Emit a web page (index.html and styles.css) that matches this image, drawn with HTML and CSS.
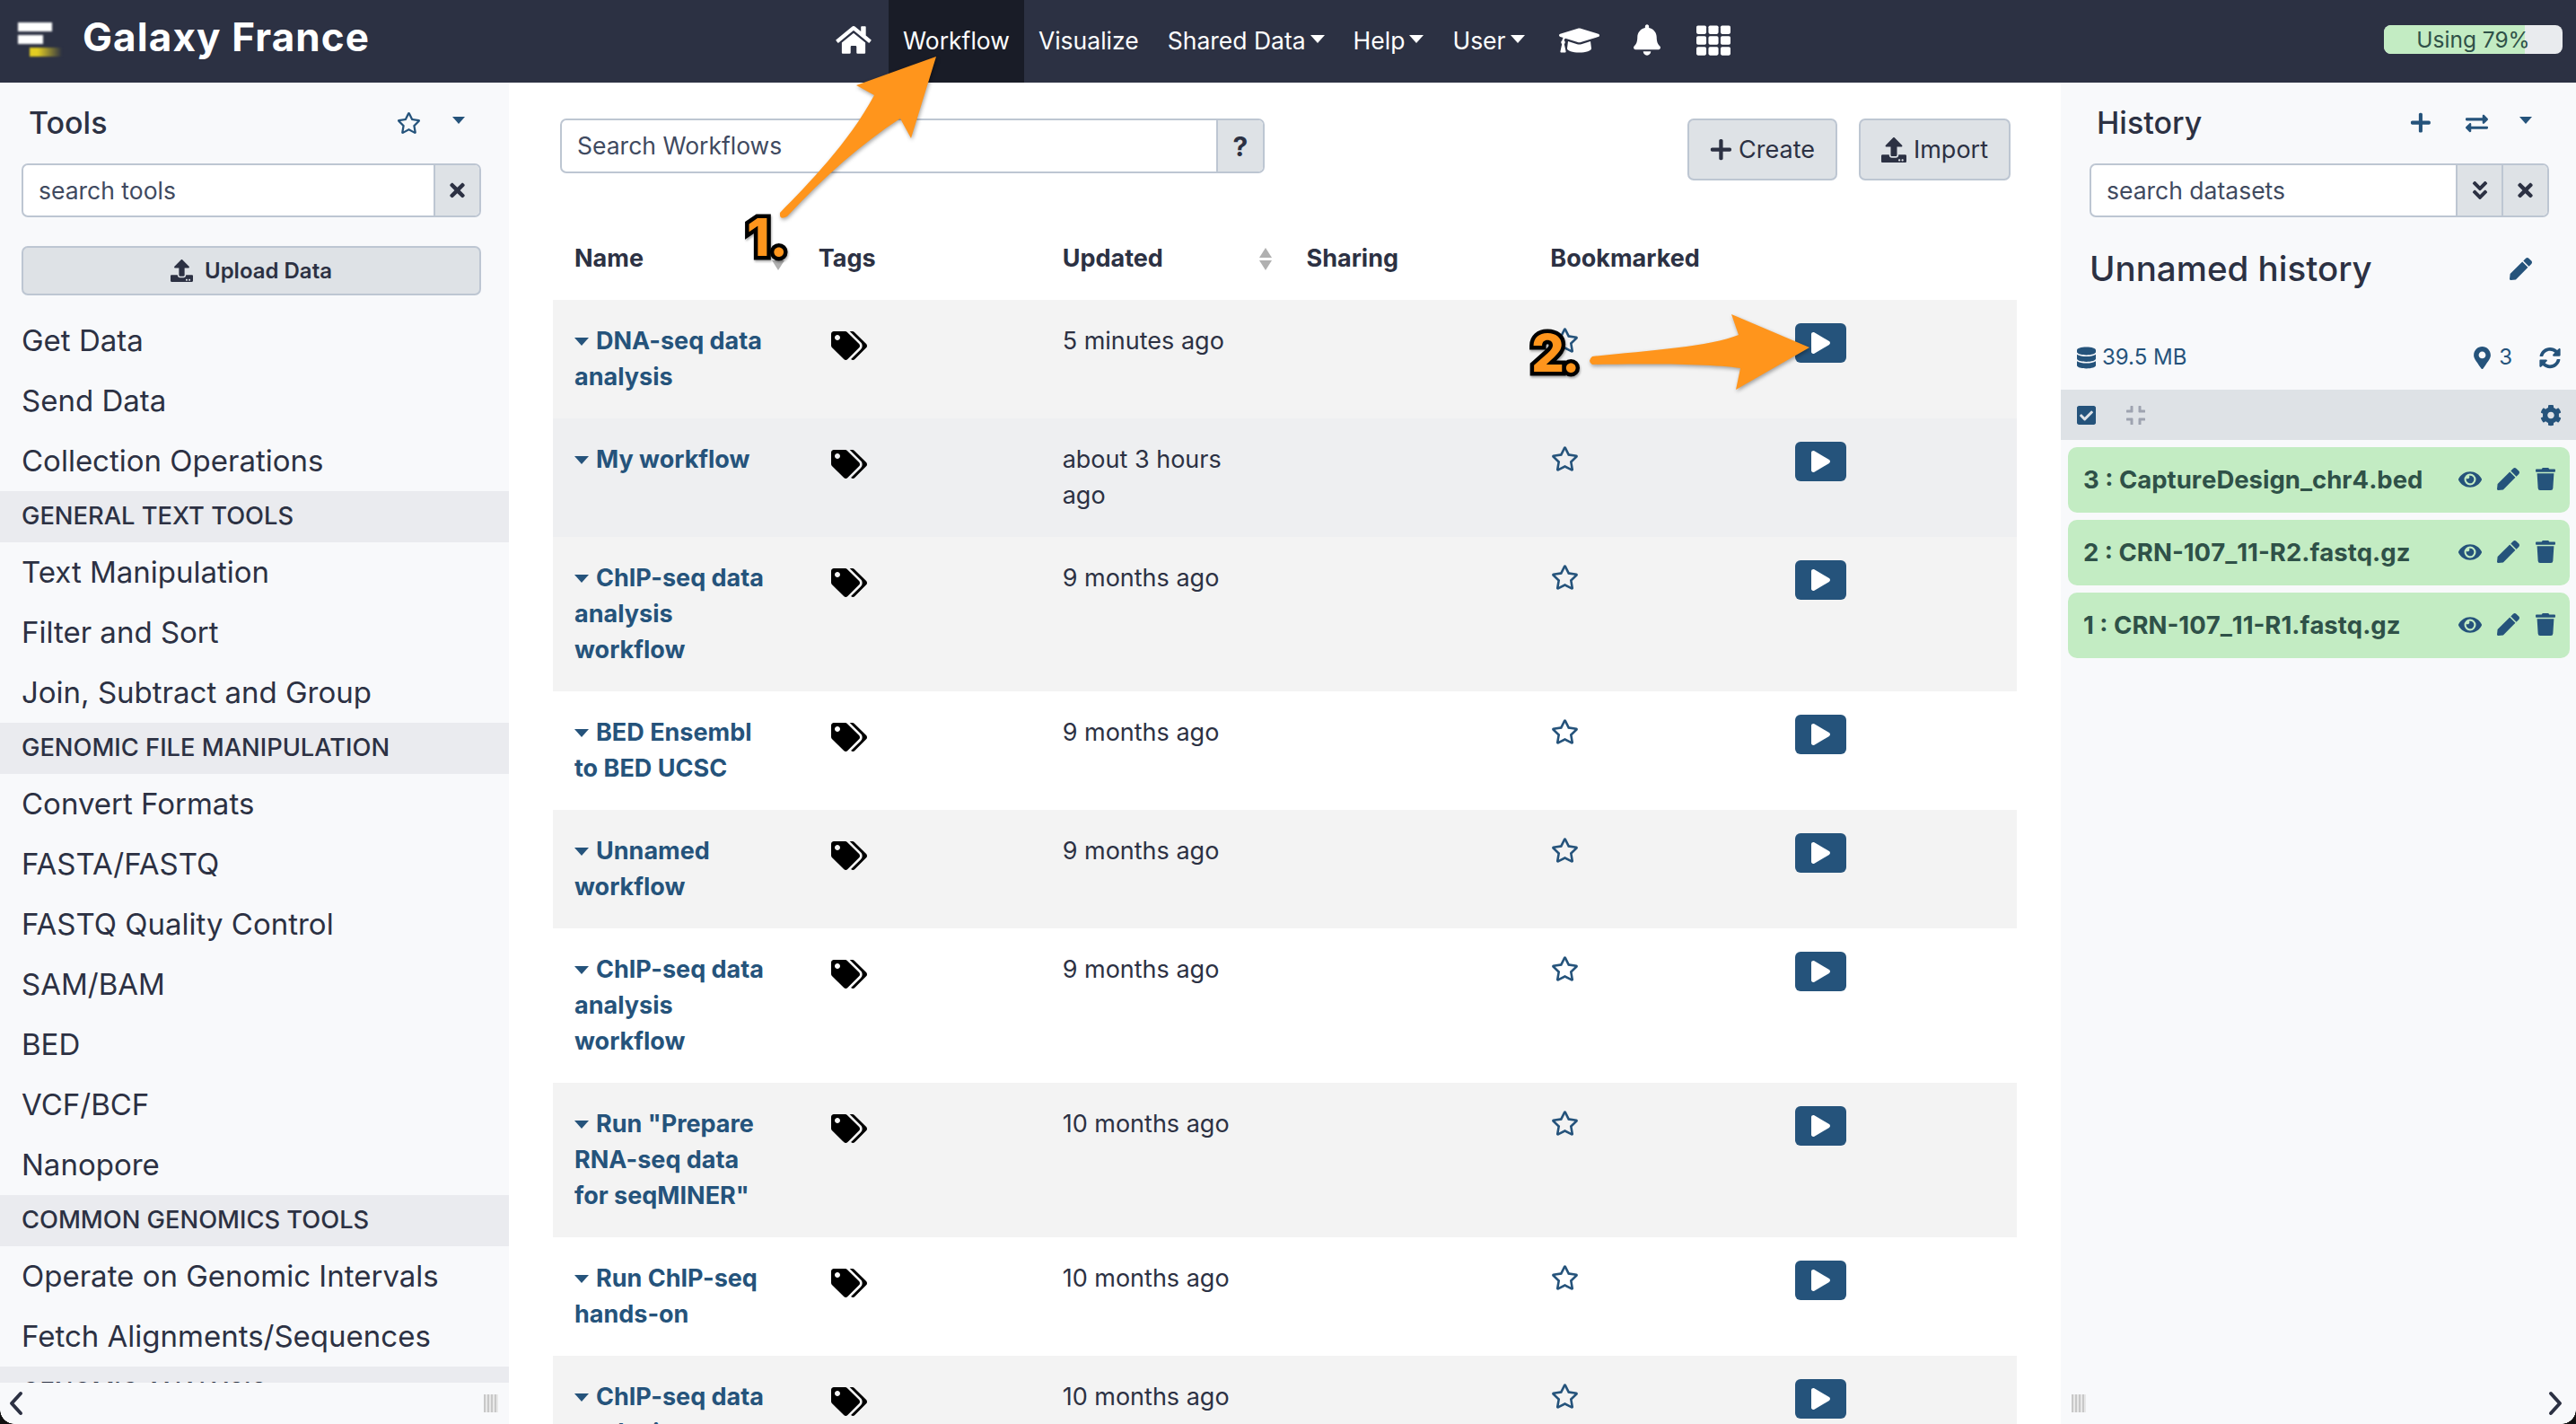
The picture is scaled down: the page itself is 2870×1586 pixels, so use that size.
FILE: index.html
```html
<!DOCTYPE html>
<html lang="en">
<head>
    <meta charset="UTF-8">
    <title>Galaxy France</title>
    <link rel="stylesheet" href="styles.css">
</head>
<body>

<svg class="defs" xmlns="http://www.w3.org/2000/svg">
    <symbol id="i-home" viewBox="0 0 576 512"><path d="M280.37 148.26L96 300.11V464a16 16 0 0 0 16 16l112.06-.29a16 16 0 0 0 15.92-16V368a16 16 0 0 1 16-16h64a16 16 0 0 1 16 16v95.64a16 16 0 0 0 16 16.05L464 480a16 16 0 0 0 16-16V300L295.67 148.26a12.19 12.19 0 0 0-15.3 0zM571.6 251.47L488 182.56V44.05a12 12 0 0 0-12-12h-56a12 12 0 0 0-12 12v72.61L318.47 43a48 48 0 0 0-61 0L4.34 251.47a12 12 0 0 0-1.6 16.9l25.5 31A12 12 0 0 0 45.15 301l235.22-193.74a12.19 12.19 0 0 1 15.3 0L530.9 301a12 12 0 0 0 16.9-1.6l25.5-31a12 12 0 0 0-1.7-16.93z"/></symbol>
    <symbol id="i-cap" viewBox="0 0 640 512"><path d="M622.34 153.2L343.4 67.5c-15.2-4.67-31.6-4.67-46.79 0L17.66 153.2c-23.54 7.23-23.54 38.36 0 45.59l48.63 14.94c-10.67 13.19-17.23 29.28-17.88 46.9C38.78 266.15 32 276.11 32 288c0 10.78 5.68 19.85 13.86 25.65L20.33 428.53C18.11 438.52 25.71 448 35.94 448h56.11c10.24 0 17.84-9.48 15.62-19.47L82.14 313.65C90.32 307.85 96 298.78 96 288c0-11.57-6.47-21.25-15.66-26.87.76-15.02 8.44-28.3 20.69-36.72L296.6 284.5c9.06 2.78 26.44 6.25 46.79 0l278.95-85.7c23.55-7.24 23.55-38.36 0-45.6zM352.79 315.09c-28.53 8.76-52.84 3.92-65.59 0l-145.02-44.55L128 384c0 35.35 85.96 64 192 64s192-28.65 192-64l-14.18-113.47-145.03 44.56z"/></symbol>
    <symbol id="i-bell" viewBox="0 0 448 512"><path d="M224 512c35.32 0 63.97-28.65 63.97-64H160.03c0 35.35 28.65 64 63.97 64zm215.39-149.71c-19.32-20.76-55.47-51.99-55.47-154.29 0-77.7-54.48-139.9-127.94-155.16V32c0-17.67-14.32-32-31.98-32s-31.98 14.33-31.98 32v20.84C118.56 68.1 64.08 130.3 64.08 208c0 102.3-36.15 133.53-55.47 154.29-6 6.45-8.66 14.16-8.61 21.71.11 16.4 12.98 32 32.1 32h383.8c19.12 0 32-15.6 32.1-32 .05-7.55-2.61-15.27-8.61-21.71z"/></symbol>
    <symbol id="i-grid" viewBox="0 0 512 512"><rect y="32" width="149" height="128" rx="24"/><rect x="181" y="32" width="150" height="128" rx="24"/><rect x="363" y="32" width="149" height="128" rx="24"/><rect y="192" width="149" height="128" rx="24"/><rect x="181" y="192" width="150" height="128" rx="24"/><rect x="363" y="192" width="149" height="128" rx="24"/><rect y="352" width="149" height="128" rx="24"/><rect x="181" y="352" width="150" height="128" rx="24"/><rect x="363" y="352" width="149" height="128" rx="24"/></symbol>
    <symbol id="i-star" viewBox="0 0 576 512"><path d="M528.1 171.5L382 150.2 316.7 17.8c-11.7-23.6-45.6-23.9-57.4 0L194 150.2 47.9 171.5c-26.2 3.8-36.7 36.1-17.7 54.6l105.7 103-25 145.5c-4.5 26.3 23.2 46 46.4 33.7L288 439.6l130.7 68.7c23.2 12.2 50.9-7.4 46.4-33.7l-25-145.5 105.7-103c19-18.5 8.5-50.8-17.7-54.6zM388.6 312.3l23.7 138.4L288 385.4l-124.3 65.3 23.7-138.4-100.6-98 139-20.2 62.2-126 62.2 126 139 20.2-100.6 98z"/></symbol>
    <symbol id="i-times" viewBox="0 0 352 512"><path d="M242.72 256l100.07-100.07c12.28-12.28 12.28-32.19 0-44.48l-22.24-22.24c-12.28-12.28-32.19-12.28-44.48 0L176 189.28 75.93 89.21c-12.28-12.28-32.19-12.28-44.48 0L9.21 111.45c-12.28 12.28-12.28 32.19 0 44.48L109.28 256 9.21 356.07c-12.28 12.28-12.28 32.19 0 44.48l22.24 22.24c12.28 12.28 32.2 12.28 44.48 0L176 322.72l100.07 100.07c12.28 12.28 32.2 12.28 44.48 0l22.24-22.24c12.28-12.28 12.28-32.19 0-44.48L242.72 256z"/></symbol>
    <symbol id="i-upload" viewBox="0 0 512 512"><path d="M296 384h-80c-13.3 0-24-10.7-24-24V192h-87.7c-17.8 0-26.7-21.5-14.1-34.1L242.3 5.7c7.5-7.5 19.8-7.5 27.3 0l152.2 152.2c12.6 12.6 3.7 34.1-14.1 34.1H320v168c0 13.3-10.7 24-24 24zm216-8v112c0 13.3-10.7 24-24 24H24c-13.3 0-24-10.7-24-24V376c0-13.3 10.7-24 24-24h136v8c0 30.9 25.1 56 56 56h80c30.9 0 56-25.1 56-56v-8h136c13.3 0 24 10.7 24 24zm-124 88c0-11-9-20-20-20s-20 9-20 20 9 20 20 20 20-9 20-20zm64 0c0-11-9-20-20-20s-20 9-20 20 9 20 20 20 20-9 20-20z"/></symbol>
    <symbol id="i-plus" viewBox="0 0 448 512"><path d="M416 208H272V64c0-17.67-14.33-32-32-32h-16c-17.67 0-32 14.33-32 32v144H48c-17.67 0-32 14.33-32 32v16c0 17.67 14.33 32 32 32h144v144c0 17.67 14.33 32 32 32h16c17.67 0 32-14.33 32-32V288h144c17.67 0 32-14.33 32-32v-16c0-17.67-14.33-32-32-32z"/></symbol>
    <symbol id="i-tags" viewBox="0 0 640 512"><path d="M497.941 225.941L286.059 14.059A48 48 0 0 0 252.118 0H48C21.49 0 0 21.49 0 48v204.118a48 48 0 0 0 14.059 33.941l211.882 211.882c18.744 18.745 49.136 18.746 67.882 0l204.118-204.118c18.745-18.745 18.745-49.137 0-67.882zM112 160c-26.51 0-48-21.49-48-48s21.49-48 48-48 48 21.49 48 48-21.49 48-48 48zm513.941 133.823L421.823 497.941c-18.745 18.745-49.137 18.745-67.882 0l-.36-.36L527.64 323.522c16.999-16.999 26.36-39.6 26.36-63.64s-9.362-46.641-26.36-63.64L331.397 0h48.721a48 48 0 0 1 33.941 14.059l211.882 211.882c18.745 18.745 18.745 49.137 0 67.882z"/></symbol>
    <symbol id="i-play" viewBox="0 0 448 512"><path d="M424.4 214.7L72.4 6.6C43.8-10.3 0 6.1 0 47.9V464c0 37.5 40.7 60.1 72.4 41.3l352-208c31.4-18.5 31.5-64.1 0-82.6z"/></symbol>
    <symbol id="i-exchange" viewBox="0 0 512 512"><path d="M0 168v-16c0-13.255 10.745-24 24-24h360V80c0-21.367 25.899-32.042 40.971-16.971l80 80c9.372 9.373 9.372 24.569 0 33.941l-80 80C409.956 271.982 384 261.456 384 240v-48H24c-13.255 0-24-10.745-24-24zm488 152H128v-48c0-21.314-25.862-32.08-40.971-16.971l-80 80c-9.372 9.373-9.372 24.569 0 33.941l80 80C102.057 463.997 128 453.437 128 432v-48h360c13.255 0 24-10.745 24-24v-16c0-13.255-10.745-24-24-24z"/></symbol>
    <symbol id="i-double" viewBox="0 0 320 512"><path d="M143 256.3L7 120.3c-9.4-9.4-9.4-24.6 0-33.9l22.6-22.6c9.4-9.4 24.6-9.4 33.9 0l96.4 96.4 96.4-96.4c9.4-9.4 24.6-9.4 33.9 0L313 86.3c9.4 9.4 9.4 24.6 0 33.9l-136 136c-9.4 9.5-24.6 9.5-34 .1zm34 192l136-136c9.4-9.4 9.4-24.6 0-33.9l-22.6-22.6c-9.4-9.4-24.6-9.4-33.9 0L160 352.1l-96.4-96.4c-9.4-9.4-24.6-9.4-33.9 0L7 278.3c-9.4 9.4-9.4 24.6 0 33.9l136 136c9.4 9.5 24.6 9.5 34 .1z"/></symbol>
    <symbol id="i-pen" viewBox="0 0 512 512"><path d="M290.74 93.24l128.02 128.02-277.99 277.99-114.14 12.6C11.35 513.54-1.56 500.62.14 485.34l12.7-114.22 277.9-277.88zm207.2-19.06l-60.11-60.11c-18.75-18.75-49.16-18.75-67.91 0l-56.55 56.55 128.02 128.02 56.55-56.55c18.75-18.76 18.75-49.16 0-67.91z"/></symbol>
    <symbol id="i-db" viewBox="0 0 448 512"><path d="M448 73.143v45.714C448 159.143 347.667 192 224 192S0 159.143 0 118.857V73.143C0 32.857 100.333 0 224 0s224 32.857 224 73.143zM448 176v102.857C448 319.143 347.667 352 224 352S0 319.143 0 278.857V176c48.125 33.143 136.208 48.572 224 48.572S399.874 209.143 448 176zm0 160v102.857C448 479.143 347.667 512 224 512S0 479.143 0 438.857V336c48.125 33.143 136.208 48.572 224 48.572S399.874 369.143 448 336z"/></symbol>
    <symbol id="i-pin" viewBox="0 0 384 512"><path d="M172.268 501.67C26.97 291.031 0 256.327 0 192 0 85.961 85.961 0 192 0s192 85.961 192 192c0 64.327-26.97 99.031-172.268 309.67-9.535 13.774-29.93 13.773-39.464 0zM192 272c44.183 0 80-35.817 80-80s-35.817-80-80-80-80 35.817-80 80 35.817 80 80 80z"/></symbol>
    <symbol id="i-sync" viewBox="0 0 512 512"><path d="M370.72 133.28C339.458 104.008 298.888 87.962 255.848 88c-77.458.068-144.328 53.178-162.791 126.85-1.344 5.363-6.122 9.15-11.651 9.15H24.103c-7.498 0-13.194-6.807-11.807-14.176C33.933 94.924 134.813 8 256 8c66.448 0 126.791 26.136 171.315 68.685L463.03 40.97C478.149 25.851 504 36.559 504 57.941V192c0 13.255-10.745 24-24 24H345.941c-21.382 0-32.09-25.851-16.971-40.971l41.75-41.749zM32 296h134.059c21.382 0 32.09 25.851 16.971 40.971l-41.75 41.75c31.262 29.273 71.835 45.319 114.876 45.28 77.418-.07 144.315-53.144 162.787-126.849 1.344-5.363 6.122-9.15 11.651-9.15h57.304c7.498 0 13.194 6.807 11.807 14.176C478.067 417.076 377.187 504 256 504c-66.448 0-126.791-26.136-171.315-68.685L48.97 471.03C33.851 486.149 8 475.441 8 454.059V320c0-13.255 10.745-24 24-24z"/></symbol>
    <symbol id="i-check" viewBox="0 0 448 512"><path d="M400 480H48c-26.51 0-48-21.49-48-48V80c0-26.51 21.49-48 48-48h352c26.51 0 48 21.49 48 48v352c0 26.51-21.49 48-48 48zm-204.686-98.059l184-184c6.248-6.248 6.248-16.379 0-22.627l-22.627-22.627c-6.248-6.248-16.379-6.249-22.628 0L184 302.745l-70.059-70.059c-6.248-6.248-16.379-6.248-22.628 0l-22.627 22.627c-6.248 6.248-6.248 16.379 0 22.627l104 104c6.249 6.25 16.379 6.25 22.628.001z"/></symbol>
    <symbol id="i-compress" viewBox="0 0 448 512"><path d="M436 192H312c-13.3 0-24-10.7-24-24V44c0-6.6 5.4-12 12-12h40c6.6 0 12 5.4 12 12v84h84c6.6 0 12 5.4 12 12v40c0 6.6-5.4 12-12 12zm-276-24V44c0-6.6-5.4-12-12-12h-40c-6.6 0-12 5.4-12 12v84H12c-6.6 0-12 5.4-12 12v40c0 6.6 5.4 12 12 12h124c13.3 0 24-10.7 24-24zm0 300V344c0-13.3-10.7-24-24-24H12c-6.6 0-12 5.4-12 12v40c0 6.6 5.4 12 12 12h84v84c0 6.6 5.4 12 12 12h40c6.6 0 12-5.4 12-12zm192 0v-84h84c6.6 0 12-5.4 12-12v-40c0-6.6-5.4-12-12-12H312c-13.3 0-24 10.7-24 24v124c0 6.6 5.4 12 12 12h40c6.6 0 12-5.4 12-12z"/></symbol>
    <symbol id="i-cog" viewBox="0 0 512 512"><path d="M487.4 315.7l-42.6-24.6c4.3-23.2 4.3-47 0-70.2l42.6-24.6c4.9-2.8 7.1-8.6 5.5-14-11.1-35.6-30-67.8-54.7-94.6-3.8-4.1-10-5.1-14.8-2.3L380.8 110c-17.9-15.4-38.5-27.3-60.8-35.1V25.8c0-5.6-3.9-10.5-9.4-11.7-36.7-8.2-74.3-7.8-109.2 0-5.5 1.2-9.4 6.1-9.4 11.7V75c-22.2 7.9-42.8 19.8-60.8 35.1L88.7 85.5c-4.9-2.8-11-1.9-14.8 2.3-24.7 26.7-43.6 58.9-54.7 94.6-1.7 5.4.6 11.2 5.5 14L67.3 221c-4.3 23.2-4.3 47 0 70.2l-42.6 24.6c-4.9 2.8-7.1 8.6-5.5 14 11.1 35.6 30 67.8 54.7 94.6 3.8 4.1 10 5.1 14.8 2.3l42.6-24.6c17.9 15.4 38.5 27.3 60.8 35.1v49.2c0 5.6 3.9 10.5 9.4 11.7 36.7 8.2 74.3 7.8 109.2 0 5.5-1.2 9.4-6.1 9.4-11.7v-49.2c22.2-7.9 42.8-19.8 60.8-35.1l42.6 24.6c4.9 2.8 11 1.9 14.8-2.3 24.7-26.7 43.6-58.9 54.7-94.6 1.5-5.5-.7-11.3-5.6-14.1zM256 336c-44.1 0-80-35.9-80-80s35.9-80 80-80 80 35.9 80 80-35.9 80-80 80z"/></symbol>
    <symbol id="i-eye" viewBox="0 0 576 512"><path d="M572.52 241.4C518.29 135.59 410.93 64 288 64S57.68 135.64 3.48 241.41a32.35 32.35 0 0 0 0 29.19C57.71 376.41 165.07 448 288 448s230.32-71.64 284.52-177.41a32.35 32.35 0 0 0 0-29.19zM288 400a144 144 0 1 1 144-144 143.93 143.93 0 0 1-144 144zm0-240a95.31 95.31 0 0 0-25.31 3.79 47.85 47.85 0 0 1-66.9 66.9A95.78 95.78 0 1 0 288 160z"/></symbol>
    <symbol id="i-trash" viewBox="0 0 448 512"><path d="M432 32H312l-9.4-18.7A24 24 0 0 0 281.1 0H166.8a23.72 23.72 0 0 0-21.4 13.3L136 32H16A16 16 0 0 0 0 48v32a16 16 0 0 0 16 16h416a16 16 0 0 0 16-16V48a16 16 0 0 0-16-16zM53.2 467a48 48 0 0 0 47.9 45h245.8a48 48 0 0 0 47.9-45L416 128H32z"/></symbol>
</svg>

<header class="navbar">
    <div class="brand">
        <div class="logo">
            <span class="logo-bar logo-bar-1"></span>
            <span class="logo-bar logo-bar-2"></span>
            <span class="logo-bar logo-bar-3"></span>
        </div>
        <span class="brand-title">Galaxy France</span>
    </div>
    <nav class="nav">
        <a class="nav-item nav-icon"><svg class="icon home-icon"><use href="#i-home"/></svg></a>
        <a class="nav-item active">Workflow</a>
        <a class="nav-item">Visualize</a>
        <a class="nav-item caret">Shared Data</a>
        <a class="nav-item caret">Help</a>
        <a class="nav-item caret">User</a>
        <a class="nav-item nav-icon"><svg class="icon cap-icon"><use href="#i-cap"/></svg></a>
        <a class="nav-item nav-icon"><svg class="icon bell-icon"><use href="#i-bell"/></svg></a>
        <a class="nav-item nav-icon"><svg class="icon grid-icon"><use href="#i-grid"/></svg></a>
    </nav>
    <div class="quota">
        <div class="quota-fill" style="width: 79%"></div>
        <span class="quota-text">Using 79%</span>
    </div>
</header>

<main class="main">
    <aside class="panel">
        <div class="panel-head">
            <span class="panel-title">Tools</span>
            <svg class="icon head-icon star-head"><use href="#i-star"/></svg>
            <span class="head-caret"></span>
        </div>
        <div class="input-group panel-search">
            <div class="input-text">search tools</div>
            <div class="addon"><svg class="icon x-icon"><use href="#i-times"/></svg></div>
        </div>
        <button class="upload-btn"><svg class="icon upload-small"><use href="#i-upload"/></svg>Upload Data</button>
        <div class="tool-list">
            <div class="tool">Get Data</div>
            <div class="tool">Send Data</div>
            <div class="tool">Collection Operations</div>
            <div class="tool-section">GENERAL TEXT TOOLS</div>
            <div class="tool">Text Manipulation</div>
            <div class="tool">Filter and Sort</div>
            <div class="tool">Join, Subtract and Group</div>
            <div class="tool-section">GENOMIC FILE MANIPULATION</div>
            <div class="tool">Convert Formats</div>
            <div class="tool">FASTA/FASTQ</div>
            <div class="tool">FASTQ Quality Control</div>
            <div class="tool">SAM/BAM</div>
            <div class="tool">BED</div>
            <div class="tool">VCF/BCF</div>
            <div class="tool">Nanopore</div>
            <div class="tool-section">COMMON GENOMICS TOOLS</div>
            <div class="tool">Operate on Genomic Intervals</div>
            <div class="tool">Fetch Alignments/Sequences</div>
            <div class="tool-section">GENOMIC ANALYSIS</div>
        </div>
        <div class="panel-foot">
            <svg class="chevron" viewBox="0 0 16 28"><polyline points="13,3 3,14 13,25"/></svg>
            <span class="grip"></span>
        </div>
    </aside>

    <section class="center">
        <div class="toolbar">
            <div class="input-group workflow-search">
                <div class="input-text">Search Workflows</div>
                <div class="addon addon-help">?</div>
            </div>
            <div class="toolbar-buttons">
                <button class="btn"><svg class="icon plus-icon"><use href="#i-plus"/></svg>Create</button>
                <button class="btn"><svg class="icon upload-icon"><use href="#i-upload"/></svg>Import</button>
            </div>
        </div>

        <table class="workflows">
            <thead>
                <tr>
                    <th><div class="th-sort">Name<span class="sort"></span></div></th>
                    <th>Tags</th>
                    <th><div class="th-sort">Updated<span class="sort"></span></div></th>
                    <th>Sharing</th>
                    <th>Bookmarked</th>
                    <th></th>
                </tr>
            </thead>
            <tbody>
                <tr>
                    <td><a class="wf-link">DNA-seq data analysis</a></td>
                    <td><svg class="icon tags"><use href="#i-tags"/></svg></td>
                    <td>5 minutes ago</td>
                    <td></td>
                    <td><svg class="icon star"><use href="#i-star"/></svg></td>
                    <td><button class="play"><svg class="icon play-icon"><use href="#i-play"/></svg></button></td>
                </tr>
                <tr class="hover">
                    <td><a class="wf-link">My workflow</a></td>
                    <td><svg class="icon tags"><use href="#i-tags"/></svg></td>
                    <td>about 3 hours ago</td>
                    <td></td>
                    <td><svg class="icon star"><use href="#i-star"/></svg></td>
                    <td><button class="play"><svg class="icon play-icon"><use href="#i-play"/></svg></button></td>
                </tr>
                <tr>
                    <td><a class="wf-link">ChIP-seq data analysis workflow</a></td>
                    <td><svg class="icon tags"><use href="#i-tags"/></svg></td>
                    <td>9 months ago</td>
                    <td></td>
                    <td><svg class="icon star"><use href="#i-star"/></svg></td>
                    <td><button class="play"><svg class="icon play-icon"><use href="#i-play"/></svg></button></td>
                </tr>
                <tr>
                    <td><a class="wf-link">BED Ensembl to BED UCSC</a></td>
                    <td><svg class="icon tags"><use href="#i-tags"/></svg></td>
                    <td>9 months ago</td>
                    <td></td>
                    <td><svg class="icon star"><use href="#i-star"/></svg></td>
                    <td><button class="play"><svg class="icon play-icon"><use href="#i-play"/></svg></button></td>
                </tr>
                <tr>
                    <td><a class="wf-link">Unnamed workflow</a></td>
                    <td><svg class="icon tags"><use href="#i-tags"/></svg></td>
                    <td>9 months ago</td>
                    <td></td>
                    <td><svg class="icon star"><use href="#i-star"/></svg></td>
                    <td><button class="play"><svg class="icon play-icon"><use href="#i-play"/></svg></button></td>
                </tr>
                <tr>
                    <td><a class="wf-link">ChIP-seq data analysis workflow</a></td>
                    <td><svg class="icon tags"><use href="#i-tags"/></svg></td>
                    <td>9 months ago</td>
                    <td></td>
                    <td><svg class="icon star"><use href="#i-star"/></svg></td>
                    <td><button class="play"><svg class="icon play-icon"><use href="#i-play"/></svg></button></td>
                </tr>
                <tr>
                    <td><a class="wf-link">Run "Prepare RNA-seq data for seqMINER"</a></td>
                    <td><svg class="icon tags"><use href="#i-tags"/></svg></td>
                    <td>10 months ago</td>
                    <td></td>
                    <td><svg class="icon star"><use href="#i-star"/></svg></td>
                    <td><button class="play"><svg class="icon play-icon"><use href="#i-play"/></svg></button></td>
                </tr>
                <tr>
                    <td><a class="wf-link">Run ChIP-seq hands-on</a></td>
                    <td><svg class="icon tags"><use href="#i-tags"/></svg></td>
                    <td>10 months ago</td>
                    <td></td>
                    <td><svg class="icon star"><use href="#i-star"/></svg></td>
                    <td><button class="play"><svg class="icon play-icon"><use href="#i-play"/></svg></button></td>
                </tr>
                <tr>
                    <td><a class="wf-link">ChIP-seq data analysis</a></td>
                    <td><svg class="icon tags"><use href="#i-tags"/></svg></td>
                    <td>10 months ago</td>
                    <td></td>
                    <td><svg class="icon star"><use href="#i-star"/></svg></td>
                    <td><button class="play"><svg class="icon play-icon"><use href="#i-play"/></svg></button></td>
                </tr>
            </tbody>
        </table>
    </section>

    <aside class="panel panel-right">
        <div class="panel-head">
            <span class="panel-title">History</span>
            <svg class="icon head-icon plus-head"><use href="#i-plus"/></svg>
            <svg class="icon head-icon exchange-head"><use href="#i-exchange"/></svg>
            <span class="head-caret"></span>
        </div>
        <div class="input-group panel-search">
            <div class="input-text">search datasets</div>
            <div class="addon"><svg class="icon double-icon"><use href="#i-double"/></svg></div>
            <div class="addon"><svg class="icon x-icon"><use href="#i-times"/></svg></div>
        </div>
        <div class="history-name">
            <span>Unnamed history</span>
            <svg class="icon pen-big"><use href="#i-pen"/></svg>
        </div>
        <div class="history-stats">
            <svg class="icon db-icon"><use href="#i-db"/></svg>
            <span class="stat-size">39.5 MB</span>
            <svg class="icon pin-icon"><use href="#i-pin"/></svg>
            <span class="stat-count">3</span>
            <svg class="icon sync-icon"><use href="#i-sync"/></svg>
        </div>
        <div class="history-tools">
            <svg class="icon check-icon"><use href="#i-check"/></svg>
            <svg class="icon compress-icon"><use href="#i-compress"/></svg>
            <svg class="icon cog-icon"><use href="#i-cog"/></svg>
        </div>
        <div class="datasets">
            <div class="dataset">
                <span class="dataset-name">3 : CaptureDesign_chr4.bed</span>
                <svg class="icon eye"><use href="#i-eye"/></svg>
                <svg class="icon pen"><use href="#i-pen"/></svg>
                <svg class="icon trash"><use href="#i-trash"/></svg>
            </div>
            <div class="dataset">
                <span class="dataset-name">2 : CRN-107_11-R2.fastq.gz</span>
                <svg class="icon eye"><use href="#i-eye"/></svg>
                <svg class="icon pen"><use href="#i-pen"/></svg>
                <svg class="icon trash"><use href="#i-trash"/></svg>
            </div>
            <div class="dataset">
                <span class="dataset-name">1 : CRN-107_11-R1.fastq.gz</span>
                <svg class="icon eye"><use href="#i-eye"/></svg>
                <svg class="icon pen"><use href="#i-pen"/></svg>
                <svg class="icon trash"><use href="#i-trash"/></svg>
            </div>
        </div>
        <div class="panel-foot">
            <span class="grip"></span>
            <svg class="chevron" viewBox="0 0 16 28"><polyline points="3,3 13,14 3,25"/></svg>
        </div>
    </aside>
</main>

<!-- annotations drawn over the screenshot -->
<svg class="arrows" viewBox="0 0 2870 1586">
    <path d="M869 237C900 205 945 160 974 106L954 95L1043 63L1015 154L1003 132C960 160 920 195 877 241Q868 246 869 237Z"/>
    <path d="M1774 397C1840 390 1905 386 1937 373L1929 350L2016 387L1934 434L1939 410C1905 405 1830 405 1774 406Q1768 402 1774 397Z"/>
</svg>
<div class="step step-1">1.</div>
<div class="step step-2">2.</div>
<span class="corner corner-left"></span>
<span class="corner corner-right"></span>

</body>
</html>
```

FILE: styles.css
```css
html, body {
    margin: 0;
    height: 1586px;
    overflow: hidden;
}
body {
    position: relative;
    font-family: Inter, "Noto Sans", sans-serif;
    font-size: 27px;
    line-height: 40px;
    color: #2c3143;
    background: white;
}
.defs {
    display: none;
}
.icon {
    display: block;
    fill: currentColor;
    flex: none;
}

/* top bar */
.navbar {
    display: flex;
    align-items: stretch;
    height: 92px;
    background: #2c3143;
    color: white;
}
.brand {
    display: flex;
    align-items: center;
    width: 912px;
    flex: none;
}
.logo {
    display: flex;
    flex-direction: column;
    gap: 4px;
    width: 52px;
    margin: 0 20px 4px 20px;
}
.logo-bar {
    display: block;
    height: 10px;
    background: white;
    filter: blur(0.8px);
}
.logo-bar-1 {
    width: 38px;
}
.logo-bar-2 {
    width: 28px;
}
.logo-bar-3 {
    width: 36px;
    margin-left: 13px;
    background: linear-gradient(to right, #e2cc22 25%, #2c3143);
}
.brand-title {
    font-size: 44px;
    font-weight: 700;
    letter-spacing: 1.1px;
    margin-bottom: 10px;
}
.nav {
    display: flex;
    flex: none;
    font-size: 26.5px;
}
.nav-item {
    display: flex;
    align-items: center;
    padding: 0 16px 3px;
}
.nav-item.active {
    background: #191c27;
    padding: 0 16px 3px;
}
.caret::after {
    content: "";
    margin: 0 0 3px 5px;
    border-top: 9px solid white;
    border-left: 8px solid transparent;
    border-right: 8px solid transparent;
}
.nav-icon {
    padding: 0 19px 3px;
}
.home-icon {
    width: 40px;
    height: 35px;
}
.cap-icon {
    width: 45px;
    height: 36px;
    margin-left: 3px;
}
.bell-icon {
    width: 30px;
    height: 35px;
}
.grid-icon {
    width: 38px;
    height: 38px;
    margin-left: 2px;
}
.quota {
    position: relative;
    align-self: flex-start;
    width: 199px;
    height: 32px;
    margin: 28px 15px 0 auto;
    background: #e9ebee;
    border-radius: 8px;
    overflow: hidden;
    color: #2f5148;
    font-size: 24.5px;
    line-height: 32px;
    text-align: center;
}
.quota-fill {
    height: 100%;
    background: #c3ecc3;
}
.quota-text {
    position: absolute;
    left: 0;
    right: 0;
    top: 0;
}

/* layout */
.main {
    display: flex;
    height: 1494px;
}
.panel {
    display: flex;
    flex-direction: column;
    width: 567px;
    flex: none;
    background: #f8f9fb;
    height: 100%;
}
.panel-right {
    width: 574px;
}
.center {
    flex: 1;
    min-width: 0;
    padding: 40px 49px 0;
    overflow: hidden;
}
.panel-head {
    display: flex;
    align-items: center;
    height: 90px;
    padding: 0 49px 0 32px;
    flex: none;
}
.panel-right .panel-head {
    padding: 0 49px 0 40px;
}
.panel-title {
    font-size: 34px;
    font-weight: 500;
    margin-right: auto;
}
.head-icon {
    color: #25537b;
}
.star-head {
    width: 27px;
    height: 26px;
    margin-right: 35px;
}
.plus-head {
    width: 23px;
    height: 26px;
    margin-right: 39px;
}
.exchange-head {
    width: 25px;
    height: 25px;
    margin-right: 35px;
}
.head-caret {
    border-top: 8px solid #25537b;
    border-left: 7px solid transparent;
    border-right: 7px solid transparent;
    margin-bottom: 6px;
}

/* inputs */
.input-group {
    display: flex;
    box-sizing: border-box;
    background: white;
    border: 2px solid #bdc6d2;
    border-radius: 7px;
    flex: none;
    color: #3f4a60;
    overflow: hidden;
}
.input-text {
    flex: 1;
    padding: 0 17px;
    font-size: 26.5px;
    line-height: 56px;
}
.addon {
    display: flex;
    align-items: center;
    justify-content: center;
    width: 49px;
    background: #dee2e6;
    border-left: 2px solid #bdc6d2;
    color: #2c3143;
}
.panel-search {
    width: 512px;
    height: 60px;
    margin-left: 24px;
}
.panel-right .panel-search {
    margin-left: 32px;
}
.x-icon {
    width: 17px;
    height: 24px;
}
.double-icon {
    width: 18px;
    height: 26px;
}
.upload-btn {
    display: flex;
    align-items: center;
    justify-content: center;
    gap: 13px;
    box-sizing: border-box;
    width: 512px;
    height: 55px;
    margin: 32px 0 17px 24px;
    flex: none;
    background: #dee2e6;
    border: 2px solid #bdc6d2;
    border-radius: 7px;
    font: 600 24px Inter, sans-serif;
    color: #2c3143;
}
.upload-small {
    width: 25px;
    height: 25px;
}

/* tool list */
.tool-list {
    flex: 1;
    min-height: 0;
    overflow: hidden;
}
.tool {
    height: 67px;
    padding-left: 24px;
    font-size: 33px;
    line-height: 67px;
}
.tool-section {
    height: 57px;
    padding-left: 24px;
    background: #eaebef;
    font-size: 27.3px;
    font-weight: 500;
    line-height: 56px;
}
.panel-foot {
    display: flex;
    align-items: center;
    justify-content: space-between;
    height: 46px;
    flex: none;
    padding: 0 12px 0 10px;
    background: #f8f9fb;
}
.panel-right .panel-foot {
    padding: 0 15px 0 12px;
}
.chevron {
    width: 16px;
    height: 28px;
    fill: none;
    stroke: #2c3143;
    stroke-width: 4;
    stroke-linecap: round;
    stroke-linejoin: round;
}
.grip {
    width: 16px;
    height: 20px;
    background: repeating-linear-gradient(to right, #c8c8c8 0 2px, #e8e8e8 2px 4px);
}

/* workflow list */
.toolbar {
    display: flex;
    justify-content: space-between;
    align-items: flex-start;
    height: 69px;
    padding: 0 7px 0 8px;
}
.workflow-search {
    width: 785px;
    height: 61px;
}
.addon-help {
    width: 50px;
    font-weight: 700;
    font-size: 30px;
}
.toolbar-buttons {
    display: flex;
    gap: 24px;
}
.btn {
    display: flex;
    align-items: center;
    justify-content: center;
    gap: 8px;
    box-sizing: border-box;
    height: 69px;
    padding: 0 23px;
    background: #dee2e6;
    border: 2px solid #bdc6d2;
    border-radius: 7px;
    font: 400 27px Inter, sans-serif;
    color: #2c3143;
}
.plus-icon {
    width: 24px;
    height: 28px;
}
.upload-icon {
    width: 28px;
    height: 28px;
}
.workflows {
    width: 100%;
    margin-top: 43px;
    border-collapse: collapse;
    table-layout: fixed;
}
.workflows th {
    padding: 24px 24px 26px;
    font-weight: 700;
    text-align: left;
}
.th-sort {
    display: flex;
    justify-content: space-between;
    align-items: center;
    margin-right: -10px;
}
.sort {
    display: flex;
    flex-direction: column;
    gap: 3px;
}
.sort::before {
    content: "";
    border-left: 7px solid transparent;
    border-right: 7px solid transparent;
    border-bottom: 11px solid #b0b0b0;
}
.sort::after {
    content: "";
    border-left: 7px solid transparent;
    border-right: 7px solid transparent;
    border-top: 11px solid #b0b0b0;
}
.workflows td {
    padding: 26px 24px;
    vertical-align: top;
}
.workflows tbody tr:nth-child(odd) {
    background: #f3f3f3;
}
.workflows tbody tr.hover {
    background: #eeeff1;
}
.wf-link {
    font-weight: 700;
    color: #25537b;
}
.wf-link::before {
    content: "";
    display: inline-block;
    vertical-align: 4px;
    margin-right: 8px;
    border-top: 9px solid #25537b;
    border-left: 8px solid transparent;
    border-right: 8px solid transparent;
}
.tags {
    width: 40px;
    height: 32px;
    margin: 9px 0 0 14px;
    color: black;
}
.star {
    width: 31px;
    height: 28px;
    margin: 5px 0 0 1px;
    color: #25537b;
}
.play {
    display: flex;
    align-items: center;
    justify-content: center;
    width: 57px;
    height: 44px;
    padding: 0;
    margin-left: 1px;
    background: #25537b;
    border: none;
    border-radius: 6px;
    color: white;
}
.play-icon {
    width: 21px;
    height: 24px;
}

/* history */
.history-name {
    display: flex;
    justify-content: space-between;
    align-items: center;
    height: 62px;
    padding: 0 49px 0 32px;
    margin-top: 26px;
    font-size: 38.5px;
    font-weight: 500;
    flex: none;
}
.pen-big {
    width: 25px;
    height: 25px;
    color: #25537b;
}
.history-stats {
    display: flex;
    align-items: center;
    height: 30px;
    margin-top: 53px;
    padding: 0 17px 0 18px;
    color: #25537b;
    font-size: 24px;
    flex: none;
}
.db-icon {
    width: 21px;
    height: 25px;
    margin-right: 7px;
}
.stat-size {
    margin-right: auto;
}
.pin-icon {
    width: 19px;
    height: 25px;
    margin-right: 9px;
}
.stat-count {
    margin-right: 30px;
}
.sync-icon {
    width: 24px;
    height: 25px;
}
.history-tools {
    display: flex;
    align-items: center;
    height: 56px;
    margin-top: 21px;
    padding: 0 16px 0 18px;
    background: #dee2e6;
    color: #25537b;
    flex: none;
}
.check-icon {
    width: 21px;
    height: 25px;
}
.compress-icon {
    width: 21px;
    height: 25px;
    margin-left: 34px;
    margin-right: auto;
    color: #9ea3b0;
}
.cog-icon {
    width: 24px;
    height: 25px;
}
.datasets {
    display: flex;
    flex-direction: column;
    gap: 8px;
    flex: 1;
    padding: 8px 7px 0 8px;
}
.dataset {
    display: flex;
    align-items: center;
    height: 73px;
    padding: 0 16px 2px 17px;
    box-sizing: border-box;
    background: #c3ecc3;
    border-radius: 10px;
    color: #25537b;
}
.dataset-name {
    margin-right: auto;
    color: #2f5148;
    font-size: 27.5px;
    font-weight: 700;
    font-kerning: none;
}
.eye {
    width: 26px;
    height: 24px;
}
.pen {
    width: 25px;
    height: 25px;
    margin-left: 17px;
}
.trash {
    width: 22px;
    height: 25px;
    margin-left: 18px;
}

/* annotations */
.arrows {
    position: absolute;
    left: 0;
    top: 0;
    width: 2870px;
    height: 1586px;
    fill: #ff951c;
    filter: drop-shadow(1px 2px 2px rgba(0, 0, 0, 0.35));
    pointer-events: none;
}
.step {
    position: absolute;
    font-family: Inter, sans-serif;
    font-size: 58px;
    font-weight: 800;
    line-height: 60px;
    color: #ff951c;
    -webkit-text-stroke: 9px black;
    paint-order: stroke fill;
    filter: drop-shadow(1px 2px 1px rgba(0, 0, 0, 0.3));
}
.step-1 {
    left: 832px;
    top: 234px;
}
.step-2 {
    left: 1706px;
    top: 363px;
    letter-spacing: -3px;
}
.corner {
    position: absolute;
    bottom: 0;
    width: 16px;
    height: 16px;
}
.corner-left {
    left: 0;
    background: radial-gradient(circle at 16px 0, transparent 15.5px, #111 16px);
}
.corner-right {
    right: 0;
    background: radial-gradient(circle at 0 0, transparent 15.5px, #111 16px);
}
```
